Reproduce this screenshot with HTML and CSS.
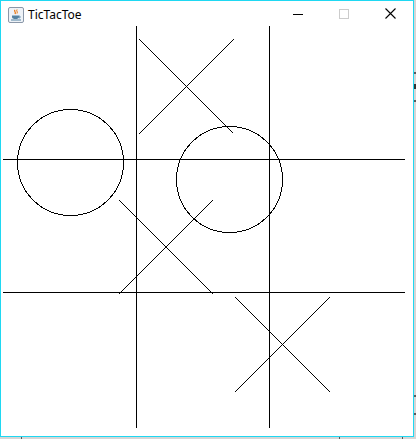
FILE: index.html
```html
<!DOCTYPE html>
<html>
<head>
<meta charset="utf-8">
<link rel="stylesheet" href="styles.css">
</head>
<body>
<div class="desktop">
  <div class="window">
    <div class="titlebar">
      <svg class="app-icon" width="16" height="16" viewBox="0 0 16 16">
        <rect x="0.5" y="0.5" width="15" height="15" rx="1.5" fill="#eef2f7" stroke="#8a97a8"/>
        <path d="M7 3 C5.5 4.5 8.5 5 7 7" stroke="#e76f00" stroke-width="1.2" fill="none"/>
        <path d="M9 2.5 C8 4 10 4.5 9 6.5" stroke="#e76f00" stroke-width="1" fill="none"/>
        <path d="M4 8.5 H11 V10 C11 11.5 9.5 12 7.5 12 C5.5 12 4 11.5 4 10 Z" fill="#5382a1"/>
        <path d="M11 9 C12.8 9 12.8 11 11 11" stroke="#5382a1" stroke-width="0.9" fill="none"/>
        <rect x="3" y="12.5" width="10" height="1" fill="#5382a1"/>
      </svg>
      <span class="title">TicTacToe</span>
      <div class="controls">
        <span class="ctl"><svg width="10" height="10" viewBox="0 0 10 10"><rect x="0" y="5" width="10" height="1" fill="#000"/></svg></span>
        <span class="ctl"><svg width="10" height="10" viewBox="0 0 10 10"><rect x="0.5" y="0.5" width="9" height="9" fill="none" stroke="#cccccc"/></svg></span>
        <span class="ctl"><svg width="11" height="11" viewBox="0 0 11 11"><path d="M0.5 0.5 L10.5 10.5 M10.5 0.5 L0.5 10.5" stroke="#000" stroke-width="1.1" fill="none"/></svg></span>
      </div>
    </div>
    <div class="client"></div>
    <svg class="board" width="416" height="439" viewBox="0 0 416 439">
      <g stroke="#000" stroke-width="1" shape-rendering="crispEdges" fill="none">
        <line x1="136.5" y1="26" x2="136.5" y2="428"/>
        <line x1="269.5" y1="26" x2="269.5" y2="428"/>
        <line x1="3" y1="159.5" x2="405" y2="159.5"/>
        <line x1="3" y1="292.5" x2="405" y2="292.5"/>
        <line x1="139" y1="39" x2="233" y2="133"/>
        <line x1="234" y1="39" x2="139" y2="134"/>
        <line x1="119" y1="200" x2="213" y2="294"/>
        <line x1="213" y1="200" x2="119" y2="294"/>
        <line x1="235" y1="297" x2="330" y2="392"/>
        <line x1="330" y1="297" x2="235" y2="392"/>
        <circle cx="70.5" cy="162.5" r="53"/>
        <circle cx="229.5" cy="179.5" r="53"/>
      </g>
    </svg>
  </div>
  <span class="mark m1"></span>
  <span class="mark m2"></span>
  <span class="mark m3"></span>
  <span class="mark m4"></span>
  <span class="mark m5"></span>
  <span class="bmark b1"></span>
  <span class="bmark b2"></span>
  <span class="bmark b3"></span>
</div>
</body>
</html>
```
FILE: styles.css
```css
html, body {
  margin: 0;
  padding: 0;
  background: #d4d4d4;
}
.desktop {
  position: relative;
  width: 416px;
  height: 439px;
  overflow: hidden;
  background: #d6d6d6;
}
.window {
  position: relative;
  width: 412px;
  height: 435px;
  border: 1px solid #1fd8f2;
  background: #ffffff;
  display: flex;
  flex-direction: column;
}
.titlebar {
  height: 29px;
  display: flex;
  align-items: center;
  padding-left: 7px;
  background: #ffffff;
  font-family: "Noto Sans", "Open Sans", sans-serif;
  font-size: 12px;
  color: #000;
}
.app-icon {
  display: block;
  margin-top: -2px;
}
.title {
  margin-left: 4px;
  margin-top: -3px;
}
.controls {
  margin-left: auto;
  display: flex;
  height: 100%;
  margin-top: -4px;
}
.ctl {
  width: 46px;
  display: flex;
  align-items: center;
  justify-content: center;
}
.client {
  flex: 1;
  background: #ffffff;
}
.board {
  position: absolute;
  left: -1px;
  top: -1px;
}
.mark {
  position: absolute;
  left: 414px;
  width: 2px;
  background: #5a5a5a;
}
.m1 { top: 72px; height: 2px; }
.m2 { top: 84px; height: 5px; background: #333; }
.m3 { top: 100px; height: 2px; }
.m4 { top: 395px; height: 2px; }
.m5 { top: 413px; height: 2px; }
.bmark {
  position: absolute;
  top: 437px;
  width: 1px;
  height: 2px;
  background: #555;
}
.b1 { left: 21px; }
.b2 { left: 339px; }
.b3 { left: 402px; }
```
